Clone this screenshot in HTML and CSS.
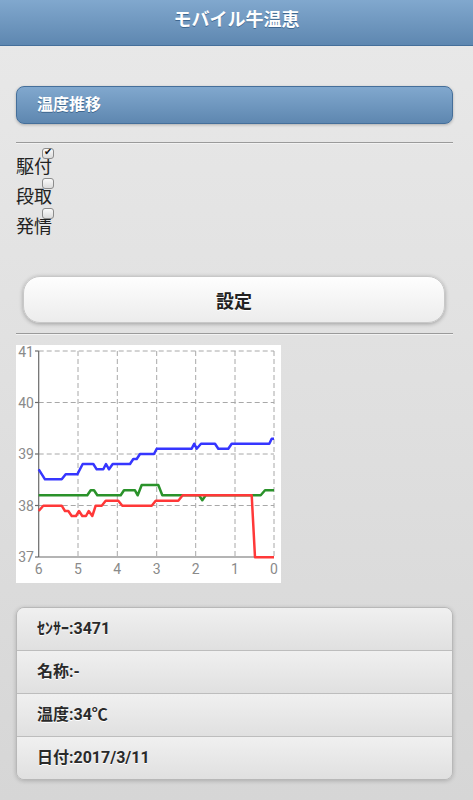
FILE: index.html
```html
<!DOCTYPE html>
<html lang="ja">
<head>
  <meta charset="UTF-8">
  <title>モバイル牛温恵</title>
  <meta name="viewport" content="width=device-width, initial-scale=1">
  <link rel="stylesheet" href="styles.css">
</head>
<body>

  <div class="header">
    <h1>モバイル牛温恵</h1>
  </div>

  <div class="content">
    <div class="collapsible-head">温度推移</div>

    <hr>

    <div class="checks">
      <label class="check"><input type="checkbox" checked><span>駆付</span></label>
      <label class="check"><input type="checkbox"><span>段取</span></label>
      <label class="check"><input type="checkbox"><span>発情</span></label>
    </div>

    <button type="button" class="btn-set">設定</button>

    <hr>

    <div class="chart">
      <svg width="265" height="238" viewBox="0 0 265 238">
        <g class="grid">
          <line x1="22.7" y1="6" x2="258" y2="6"/>
          <line x1="22.7" y1="57.5" x2="258" y2="57.5"/>
          <line x1="22.7" y1="109" x2="258" y2="109"/>
          <line x1="22.7" y1="160.5" x2="258" y2="160.5"/>
          <line x1="62" y1="6" x2="62" y2="212"/>
          <line x1="101.3" y1="6" x2="101.3" y2="212"/>
          <line x1="140.7" y1="6" x2="140.7" y2="212"/>
          <line x1="179.7" y1="6" x2="179.7" y2="212"/>
          <line x1="219" y1="6" x2="219" y2="212"/>
          <line x1="258" y1="6" x2="258" y2="212"/>
        </g>
        <g class="axis">
          <line x1="22.7" y1="6" x2="22.7" y2="212"/>
          <line x1="22.7" y1="212" x2="258" y2="212"/>
          <line x1="19" y1="6" x2="22.7" y2="6"/>
          <line x1="19" y1="57.5" x2="22.7" y2="57.5"/>
          <line x1="19" y1="109" x2="22.7" y2="109"/>
          <line x1="19" y1="160.5" x2="22.7" y2="160.5"/>
          <line x1="19" y1="212" x2="22.7" y2="212"/>
        </g>
        <g class="ylabels">
          <text x="18" y="12">41</text>
          <text x="18" y="62.5">40</text>
          <text x="18" y="114">39</text>
          <text x="18" y="165.5">38</text>
          <text x="18" y="217">37</text>
        </g>
        <g class="xlabels">
          <text x="22.7" y="229">6</text>
          <text x="62" y="229">5</text>
          <text x="101.3" y="229">4</text>
          <text x="140.7" y="229">3</text>
          <text x="179.7" y="229">2</text>
          <text x="219" y="229">1</text>
          <text x="258" y="229">0</text>
        </g>
        <polyline class="line blue" points="22.7,124.3 29,134.3 45.7,134.3 49.7,129.3 61.3,129.3 66.7,119 77.3,119 80.7,124.3 87.3,124.3 90,119 93,124.3 96.7,119 114,119 117.3,114 120.7,114 124,109 138,109 140.7,103.7 175.7,103.7 178.3,98.7 180.7,103.7 185,98.7 199,98.7 202.3,103.7 212.3,103.7 215.7,98.7 253.3,98.7 255.7,93.7 258,93.7"/>
        <polyline class="line green" points="22.7,150.3 71.3,150.3 74.7,145.3 78,145.3 81.3,150.3 104.7,150.3 108,145.3 119,145.3 121.7,150.3 125.7,140 142.3,140 146.3,150.3 183,150.3 186.3,155.3 189.7,150.3 244.7,150.3 249,145.3 258,145.3"/>
        <polyline class="line red" points="22.7,166 27.3,160.7 45.7,160.7 49,166 52.3,166 55.7,171 60,171 63,166 66.3,171 70,171 72.7,166 76.3,171 79.7,160.7 85.7,160.7 89.7,155.7 102.3,155.7 106.3,160.7 135.7,160.7 139.7,155.7 162.3,155.7 166.7,150.3 235.7,150.3 239,212.3 258,212.3"/>
      </svg>
    </div>

    <ul class="info">
      <li>ｾﾝｻｰ:3471</li>
      <li>名称:-</li>
      <li>温度:34℃</li>
      <li>日付:2017/3/11</li>
    </ul>
  </div>

</body>
</html>
```

FILE: styles.css
```css
html {
  background: #d6d6d6;
}
body {
  margin: 0;
  min-height: 800px;
  font-family: Roboto, "Noto Sans CJK JP", sans-serif;
  color: #333;
  background: linear-gradient(#e9e9e9, #d6d6d6);
}
.header {
  height: 45px;
  background: linear-gradient(#81a8ce, #5e87b0);
  border-bottom: 1px solid #456f9a;
}
.header h1 {
  margin: 0;
  font-size: 18px;
  line-height: 40px;
  text-align: center;
  color: #fff;
  text-shadow: 0 1px 0 #3e6790;
}
.content {
  padding: 0 20px 20px 16px;
}
.collapsible-head {
  margin-top: 40px;
  height: 36px;
  line-height: 36px;
  padding-left: 20px;
  font-size: 16px;
  font-weight: bold;
  color: #fff;
  text-shadow: 0 1px 0 #3e6790;
  background: linear-gradient(#81a8ce, #5e87b0);
  border: 1px solid #456f9a;
  border-radius: 8px;
  box-shadow: 0 1px 3px rgba(0,0,0,0.25);
}
hr {
  height: 0;
  margin: 18px 0 0;
  border: 0;
  border-top: 1px solid #9a9a9a;
  border-bottom: 1px solid #f2f2f2;
}
.checks {
  margin-top: 4px;
}
.check {
  display: block;
}
.check input {
  display: block;
  position: relative;
  appearance: none;
  width: 12px;
  height: 11px;
  margin: 0 0 0 26px;
  border: 1px solid #8c8c8c;
  border-radius: 3px;
  background: linear-gradient(#fafafa, #dcdcdc);
}
.check input:checked::before {
  content: "✔";
  position: absolute;
  left: 1px;
  top: -3px;
  font-size: 10px;
  line-height: 12px;
  color: #111;
}
.check span {
  display: block;
  margin-top: -4px;
  font-size: 18px;
  line-height: 23px;
  color: #222;
}
.btn-set {
  display: block;
  width: calc(100% - 15px);
  height: 47px;
  margin: 38px 8px 0 7px;
  font-family: inherit;
  font-size: 18px;
  font-weight: bold;
  color: #222;
  text-shadow: 0 1px 0 #fff;
  background: linear-gradient(#fefefe, #ececec);
  border: 1px solid #c8c8c8;
  border-radius: 17px;
  box-shadow: 0 1px 4px rgba(0,0,0,0.3);
}
.btn-set + hr {
  margin-top: 10px;
}
.chart {
  width: 265px;
  height: 238px;
  margin-top: 10px;
  background: #fff;
}
.chart svg {
  display: block;
}
.grid line {
  stroke: #a8a8a8;
  stroke-width: 1;
  stroke-dasharray: 5 3;
}
.axis line {
  stroke: #6a6a6a;
  stroke-width: 1.2;
}
.ylabels text, .xlabels text {
  font-family: Roboto, sans-serif;
  font-size: 14px;
  fill: #8a8a8a;
}
.ylabels text {
  text-anchor: end;
}
.xlabels text {
  text-anchor: middle;
}
.line {
  fill: none;
  stroke-width: 2.5;
  stroke-linejoin: round;
}
.blue { stroke: #3636ff; }
.green { stroke: #2a922a; }
.red { stroke: #ff3838; }
.info {
  list-style: none;
  margin: 24px 0 0;
  padding: 0;
  border: 1px solid #b8b8b8;
  border-radius: 8px;
  overflow: hidden;
  box-shadow: 0 1px 4px rgba(0,0,0,0.2);
}
.info li {
  height: 42px;
  line-height: 42px;
  padding-left: 20px;
  font-size: 16px;
  font-weight: bold;
  color: #2a2a2a;
  text-shadow: 0 1px 0 #fff;
  background: linear-gradient(#f0f0f0, #e0e0e0);
  border-bottom: 1px solid #bdbdbd;
}
.info li:last-child {
  border-bottom: 0;
}
```
